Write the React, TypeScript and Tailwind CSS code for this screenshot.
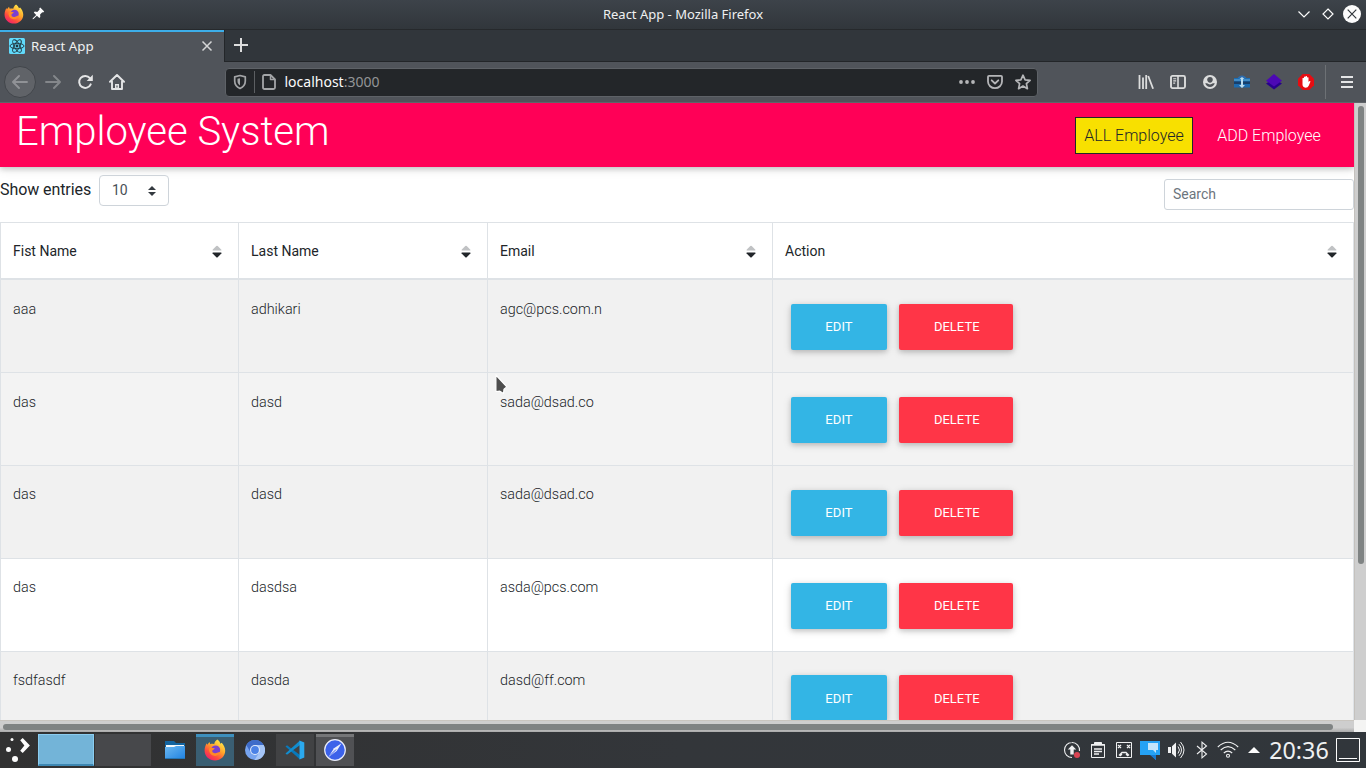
import React from "react";

function FirefoxLogo({ id, size }: { id: string; size: number }) {
  return (
    <svg width={size} height={size} viewBox="0 0 22 22">
      <defs>
        <linearGradient id={id} x1="0.85" y1="0.05" x2="0.2" y2="1">
          <stop offset="0" stopColor="#fff04e" />
          <stop offset="0.4" stopColor="#ffa52a" />
          <stop offset="0.7" stopColor="#ff4f3c" />
          <stop offset="1" stopColor="#ee1a72" />
        </linearGradient>
      </defs>
      <path
        d="M13.3.5c2 1.400 2.700 2.700 3.100 4.300l1.300-1c2 2.200 3.500 4.800 3.500 8 0 5.500-4.500 9.700-10.200 9.700S.6 17.100.6 11.700c0-2.800.8-5.300 2-7.400l.6 1.500L5.500 3l.8 2.200c1.200-.5 2.700-.4 3.900.1.300-2 1.300-3.700 3.100-4.800z"
        fill={`url(#${id})`}
      />
      <circle cx="11.600" cy="11" r="4.600" fill="#7a3fd0" />
      <path
        d="M5 9.500c2-.9 3.600-.5 5.800-.3-.3 1.500-2.600 1.300-2.600 2.900 0 1.700 2 2.600 4 2 1.700-.5 2.600-1.700 4.200-1-1.300 3.200-4.400 4.400-7.100 3.500C6.300 15.600 4.600 12.500 5 9.500z"
        fill="#ff8a26"
      />
    </svg>
  );
}

function TitleBar() {
  return (
    <div className="grid h-[30px] grid-cols-[1fr_auto_1fr] items-center border-b border-[#26292c] bg-linear-to-b from-[#3d434a] to-[#31363b]">
      <div className="-mt-0.5 flex items-center gap-2 pl-1">
        <FirefoxLogo id="fx-title" size={20} />
        <svg width="13" height="13" viewBox="0 0 13 13" fill="#fcfcfc">
          <path d="M8.200.6l4 4-1.100.9-.8-.2-2.200 2.300.2 2.500-1 1L4.900 8.700 1.500 12.100.6 12.300l.2-1L4.200 8 1.800 5.600l1-1 2.500.3 2.300-2.300-.3-1z" />
        </svg>
      </div>
      <div className="-mt-0.5 text-[13px] leading-5 text-[#eff0f1]">React App - Mozilla Firefox</div>
      <div className="-mt-px flex items-center justify-end gap-[6px] pr-[5px]">
        <svg width="18" height="18" viewBox="0 0 18 18" fill="none" stroke="#fcfcfc" strokeWidth="1.200">
          <path d="M3.500 6.500L9 12l5.500-5.500" />
        </svg>
        <svg width="18" height="18" viewBox="0 0 18 18" fill="none" stroke="#fcfcfc" strokeWidth="1.200">
          <path d="M9 4l5 5-5 5-5-5z" />
        </svg>
        <svg width="18" height="18" viewBox="0 0 18 18">
          <circle cx="9" cy="9" r="9" fill="#fcfcfc" />
          <path d="M4.700 4.700l8.600 8.600M13.300 4.700l-8.600 8.600" stroke="#31363b" strokeWidth="1.200" />
        </svg>
      </div>
    </div>
  );
}

function TabStrip() {
  return (
    <div className="flex h-[32px] bg-[#31363b]">
      <div className="flex w-[224px] items-center border-t-2 border-[#3daee9] bg-[#50545a] pr-[10px] pb-[2px] pl-[9px]">
        <svg width="16" height="16" viewBox="0 0 16 16">
          <rect width="16" height="16" rx="1.500" fill="#61dafb" />
          <g fill="none" stroke="#20363f" strokeWidth="0.900">
            <ellipse cx="8" cy="8" rx="7" ry="2.700" />
            <ellipse cx="8" cy="8" rx="7" ry="2.700" transform="rotate(60 8 8)" />
            <ellipse cx="8" cy="8" rx="7" ry="2.700" transform="rotate(120 8 8)" />
          </g>
          <circle cx="8" cy="8" r="1.400" fill="#20363f" />
        </svg>
        <span className="ml-[6px] flex-1 text-[13.300px] leading-5 text-[#eff0f1]">React App</span>
        <svg width="14" height="14" viewBox="0 0 14 14" stroke="#d5d6d7" strokeWidth="1.500">
          <path d="M2.500 2.500l9 9M11.500 2.500l-9 9" />
        </svg>
      </div>
      <div className="flex flex-1 items-center border-b border-l border-[#232629] pl-2">
        <svg width="16" height="16" viewBox="0 0 16 16" stroke="#dcdddd" strokeWidth="2" className="-mt-px">
          <path d="M8 1v14M1 8h14" />
        </svg>
      </div>
    </div>
  );
}

function Slot({ children }: { children: React.ReactNode }) {
  return <div className="flex h-8 w-8 shrink-0 items-center justify-center">{children}</div>;
}

function Toolbar() {
  return (
    <div className="flex h-[41px] items-center border-b border-[#606469] bg-[#50545a] pl-1">
      <div className="flex h-8 w-8 items-center justify-center rounded-full border border-[#42464b] bg-[#606368]">
        <svg width="16" height="16" viewBox="0 0 16 16" fill="none" stroke="#909296" strokeWidth="1.900" strokeLinecap="round" strokeLinejoin="round">
          <path d="M15 8H1.200M7 2L1 8l6 6" />
        </svg>
      </div>
      <div className="ml-px flex">
        <Slot>
          <svg width="16" height="16" viewBox="0 0 16 16" fill="none" stroke="#84878b" strokeWidth="1.900" strokeLinecap="round" strokeLinejoin="round">
            <path d="M1 8h13.800M9 2l6 6-6 6" />
          </svg>
        </Slot>
        <Slot>
          <svg width="16" height="16" viewBox="0 0 16 16">
            <path d="M13.700 10.300A6 6 0 1 1 12.900 4.200" fill="none" stroke="#e4e5e6" strokeWidth="2" strokeLinecap="round" />
            <path d="M15.800.8v6.200H9.700z" fill="#e4e5e6" />
          </svg>
        </Slot>
        <Slot>
          <svg width="16" height="16" viewBox="0 0 16 16" fill="none" stroke="#e4e5e6" strokeWidth="1.900" strokeLinejoin="round" strokeLinecap="round">
            <path d="M1 7.800L8 1l7 6.800M3 7.500V15h10V7.500" />
            <path d="M8 15v-5" strokeWidth="4" strokeLinecap="butt" />
            <path d="M8 13.500v-2" stroke="#50545a" strokeWidth="1.200" strokeLinecap="butt" />
          </svg>
        </Slot>
      </div>
      <div className="ml-[92px] flex h-[29px] w-[813px] items-center rounded-[4px] border border-[#5e6267] bg-[#232629] pr-[6px] pl-[6px]">
        <svg width="16" height="16" viewBox="0 0 16 16" fill="none" stroke="#a3a5a7" strokeWidth="1.700">
          <path d="M8 1.500l5.300 1.300V7c0 3.700-2 5.900-5.300 7.500C4.700 12.900 2.700 10.700 2.700 7V2.800z" strokeLinejoin="round" />
          <path d="M8 4.300v7.300C6.200 10.300 5.500 9 5.500 7V4.800z" fill="#a3a5a7" stroke="none" />
        </svg>
        <div className="ml-[6px] h-[22px] w-px bg-[#5c5f62]" />
        <svg width="16" height="16" viewBox="0 0 16 16" fill="none" stroke="#a3a5a7" strokeWidth="1.800" strokeLinejoin="round" className="ml-[6px]">
          <path d="M3.500 1h6L14 5.500V13.500Q14 15 12.500 15h-9Q2 15 2 13.500V2.500Q2 1 3.500 1z" />
          <path d="M9.500 1v4.500H14" strokeWidth="1.500" />
        </svg>
        <span className="ml-[7.500px] flex-1 text-[14px] leading-5 text-[#fcfcfc]">
          localhost<span className="text-[#939597]">:3000</span>
        </span>
        <div className="flex gap-3">
          <svg width="16" height="16" viewBox="0 0 16 16" fill="#b5b6b8">
            <circle cx="2" cy="8" r="1.900" />
            <circle cx="8" cy="8" r="1.900" />
            <circle cx="14" cy="8" r="1.900" />
          </svg>
          <svg width="16" height="16" viewBox="0 0 16 16" fill="none" stroke="#b5b6b8" strokeWidth="1.800" strokeLinecap="round" strokeLinejoin="round">
            <path d="M2 1.800h12q1 0 1 1V7.500a7 6.700 0 0 1-14 0V2.800q0-1 1-1z" />
            <path d="M4.700 6.300L8 9.500l3.300-3.200" />
          </svg>
          <svg width="16" height="16" viewBox="0 0 16 16" fill="none" stroke="#b5b6b8" strokeWidth="1.700" strokeLinejoin="round">
            <path d="M8 1.200l2.100 4.600 5 .5-3.700 3.400 1 5L8 12.100l-4.400 2.600 1-5L.9 6.300l5-.5z" />
          </svg>
        </div>
      </div>
      <div className="ml-[92px] flex">
        <Slot>
          <svg width="16" height="16" viewBox="0 0 16 16" stroke="#dcdddd" strokeWidth="1.800">
            <path d="M1.500 1v14M5 3.500V15M8.200 1v14M10.200 2l4.900 12.800" />
          </svg>
        </Slot>
        <Slot>
          <svg width="16" height="16" viewBox="0 0 16 16" fill="none" stroke="#dcdddd">
            <rect x="1" y="1.900" width="14" height="12.200" rx="1.500" strokeWidth="1.900" />
            <path d="M8 2v12" strokeWidth="1.600" />
            <path d="M3.200 4.700h3M3.200 6.900h3M3.200 9.100h2" strokeWidth="1.100" />
          </svg>
        </Slot>
        <Slot>
          <svg width="16" height="16" viewBox="0 0 16 16">
            <circle cx="8" cy="8" r="7" fill="#dcdddd" />
            <path d="M8 3.100c1.900 0 2.800 1.200 2.800 2.700S9.600 8.700 8 8.700 5.200 7.300 5.200 5.800 6.100 3.100 8 3.100z" fill="#50545a" />
            <path d="M3.200 9.300h1.900c1.700 1.500 4.100 1.500 5.800 0h1.900c-.7 2.300-2.600 3.800-4.800 3.800s-4.100-1.500-4.800-3.800z" fill="#50545a" />
          </svg>
        </Slot>
        <Slot>
          <svg width="16" height="16" viewBox="0 0 16 16">
            <path d="M3 5.500C4 2.500 6 1.500 8 1.500s4 1 5 4z" fill="#2d6db0" />
            <rect x="0" y="4" width="16" height="9.500" fill="#1c6bb0" />
            <path d="M0 5h16v2H0z" fill="#3f8cc8" />
            <path d="M0 7.500h16v2.500H0z" fill="#173f6b" />
            <path d="M7 4h2v7h2l-3 3-3-3h2zM5.500 5L8 3l2.500 2z" fill="#b9daee" />
          </svg>
        </Slot>
        <Slot>
          <svg width="16" height="16" viewBox="0 0 16 16">
            <path d="M0 9.500L8 5l8 4.500-8 6z" fill="#28008d" />
            <path d="M8 0l8 6.700-8 5.800-8-5.800z" fill="#4c08b5" />
          </svg>
        </Slot>
        <Slot>
          <svg width="16" height="16" viewBox="0 0 16 16">
            <path d="M4.700 0h6.600L16 4.700v6.600L11.300 16H4.700L0 11.300V4.700z" fill="#e60d12" />
            <path d="M4.500 4.300q.8-.9 1.500 0V3q.8-.9 1.500 0v-.7q.8-.8 1.500 0V3.600q.8-.8 1.500 0V8l1-.9q1.100-.2.9.7l-1.700 4Q9.900 13.800 7.600 13.800C5.200 13.500 4.500 12 4.500 10.500z" fill="#fff" />
          </svg>
        </Slot>
      </div>
      <div className="ml-[3px] h-[34px] w-px bg-[#6d7175]" />
      <svg width="14" height="14" viewBox="0 0 14 14" stroke="#e4e5e6" strokeWidth="1.900" className="ml-[14px]">
        <path d="M1 2h12M1 7h12M1 12h12" />
      </svg>
    </div>
  );
}

function SortIcon() {
  return (
    <svg width="10" height="14" viewBox="0 0 10 14" className="mt-0.5">
      <path d="M.9 5.400Q.2 5.400.6 4.700L4.300 1Q5 .4 5.700 1L9.400 4.700Q9.800 5.400 9.100 5.400z" fill="#c0c2c4" />
      <path d="M.9 7.600Q.2 7.600.6 8.400L4.300 12.200Q5 12.900 5.700 12.200L9.400 8.400Q9.800 7.600 9.100 7.600z" fill="#212529" />
    </svg>
  );
}

const headers = ["Fist Name", "Last Name", "Email", "Action"];
const rows = [
  { cells: ["aaa", "adhikari", "agc@pcs.com.n"], tone: "bg-[#f1f1f1]" },
  { cells: ["das", "dasd", "sada@dsad.co"], tone: "bg-[#f3f3f3]" },
  { cells: ["das", "dasd", "sada@dsad.co"], tone: "bg-[#f1f1f1]" },
  { cells: ["das", "dasdsa", "asda@pcs.com"], tone: "bg-white" },
  { cells: ["fsdfasdf", "dasda", "dasd@ff.com"], tone: "bg-[#f1f1f1]" },
];

function EmployeeTable() {
  return (
    <div className="border-t border-r border-[#dee2e6] text-[14.400px]">
      <div className="grid h-[57.400px] grid-cols-[238px_249px_285px_581px] border-b-2 border-[#dee2e6]">
        {headers.map((h) => (
          <div key={h} className="flex items-center justify-between border-l border-[#dee2e6] pr-4 pl-3 text-[14px] leading-[22px] font-normal text-[#212529]">
            <span>{h}</span>
            <SortIcon />
          </div>
        ))}
      </div>
      {rows.map((row, i) => (
        <div key={i} className={`grid h-[92.800px] grid-cols-[238px_249px_285px_581px] border-b border-[#dee2e6] ${row.tone}`}>
          {row.cells.map((c, j) => (
            <div key={j} className="border-l border-[#dee2e6] pt-[18.400px] pl-3 leading-[22px] font-light text-[#212529]">
              {c}
            </div>
          ))}
          <div className="flex items-start gap-3 border-l border-[#dee2e6] pt-[23.800px] pl-[18px]">
            <button className="h-[46px] w-24 rounded-[2px] bg-[#33b5e5] text-[13px] tracking-[0.1px] text-white shadow-[0_2px_5px_0_rgba(0,0,0,0.16),0_2px_10px_0_rgba(0,0,0,0.12)]">EDIT</button>
            <button className="h-[46px] w-[114px] rounded-[2px] bg-[#ff3547] pl-[1.500px] text-[13px] text-white shadow-[0_2px_5px_0_rgba(0,0,0,0.16),0_2px_10px_0_rgba(0,0,0,0.12)]">DELETE</button>
          </div>
        </div>
      ))}
    </div>
  );
}

function Page() {
  return (
    <div className="h-[617px] w-[1354px] overflow-hidden bg-white font-[Roboto,sans-serif]">
      <div className="flex h-16 items-start justify-between bg-[#ff0057] pr-[25px] pl-4 shadow-[0_2px_5px_0_rgba(0,0,0,0.16),0_2px_10px_0_rgba(0,0,0,0.12)]">
        <h1 className="mt-[5px] text-[40px] leading-[48px] font-light text-white">Employee System</h1>
        <div className="mt-[14px] flex gap-4 text-[16px] leading-[35px] font-light">
          <div className="h-[37px] w-[118px] border border-[#212529] bg-[#f8e000] text-center text-[#212529]">ALL Employee</div>
          <div className="h-[37px] w-[120px] border border-transparent text-center text-white">ADD Employee</div>
        </div>
      </div>
      <div className="flex h-[55px] items-start justify-between pt-2">
        <div className="flex items-center text-[16px] text-[#212529]">
          <span className="-mt-0.5 w-[91px] tracking-[-0.080px] whitespace-nowrap">Show entries</span>
          <div className="ml-2 flex h-[31px] w-[70px] items-center justify-between rounded-[4px] border border-[#ced4da] pr-3 pl-3 text-[14px] text-[#495057]">
            10
            <svg width="8" height="10" viewBox="0 0 8 10" fill="#343a40">
              <path d="M4 0l4 4H0zM4 10L0 6h8z" />
            </svg>
          </div>
        </div>
        <div className="mt-1 flex h-[31px] w-[190px] items-center rounded-[3px] border border-[#ced4da] px-2 text-[14px] text-[#6c757d]">Search</div>
      </div>
      <EmployeeTable />
    </div>
  );
}

function Tray({ children }: { children: React.ReactNode }) {
  return <div className="flex w-[26px] justify-center">{children}</div>;
}

function Taskbar() {
  return (
    <div className="flex h-9 items-center bg-linear-to-r from-[#313131] via-[#33363a] to-[#31363b]">
      <svg width="38" height="36" viewBox="0 0 38 36" fill="#fcfcfc">
        <circle cx="12" cy="7.500" r="1.500" />
        <circle cx="8.500" cy="17.500" r="2.500" />
        <circle cx="15" cy="27" r="3" />
        <path d="M20.200 8.300L22.700 6l7.200 7.400-7.200 7.700-2.500-2.400 4.200-5.300z" />
      </svg>
      <div className="flex gap-px">
        <div className="h-8 w-14 border border-b-2 border-[#8bcdf0] border-b-[#3d87b2] bg-[#73b4d8]" />
        <div className="h-8 w-14 bg-[#47484b]" />
      </div>
      <div className="ml-[5px] flex h-8 w-[38px] items-center justify-center">
        <svg width="20" height="18" viewBox="0 0 20 18">
          <defs>
            <linearGradient id="folder" x1="0" y1="0" x2="1" y2="1">
              <stop offset="0" stopColor="#6cb8f0" />
              <stop offset="1" stopColor="#1f82e2" />
            </linearGradient>
          </defs>
          <path d="M0 0h9l2 2h9v8H0z" fill="#14649f" />
          <path d="M1 4h18v5H1z" fill="#f5f8fa" />
          <path d="M0 6h9l2-1h9v13H0z" fill="url(#folder)" />
          <path d="M0 17h20v1H0z" fill="#2575b4" />
        </svg>
      </div>
      <div className="ml-0.5 flex h-8 w-[38px] items-center justify-center border-t-[3px] border-[#3d8fbd] bg-[#3a5e72] pb-[3px]">
        <FirefoxLogo id="fx-task" size={22} />
      </div>
      <div className="ml-0.5 flex h-8 w-[38px] items-center justify-center">
        <svg width="20" height="20" viewBox="0 0 20 20">
          <circle cx="10" cy="10" r="10" fill="#77a4ef" />
          <path d="M1.300 5A10 10 0 0 1 18.700 5H10L5.700 12.500z" fill="#3e6cc9" />
          <path d="M18.700 5A10 10 0 0 1 9.500 20L14.300 12.500 10 5z" fill="#a5c5f7" />
          <circle cx="10" cy="10" r="5" fill="#dfe9fa" />
          <circle cx="10" cy="10" r="3.900" fill="#4b82e6" />
        </svg>
      </div>
      <div className="ml-0.5 flex h-8 w-[38px] items-center justify-center bg-[#414244]">
        <svg width="20" height="20" viewBox="0 0 20 20">
          <path d="M.5 6.500L2 5.200 15 15v4.500z" fill="#0879bb" />
          <path d="M.5 13.500L2 14.800 15 5V.5z" fill="#118dd0" />
          <path d="M14.500.5L19.300 2.500v15l-4.800 2z" fill="#2ba9ee" />
        </svg>
      </div>
      <div className="ml-0.5 flex h-8 w-[38px] items-center justify-center border-t-[3px] border-[#757678] bg-[#505154] pb-[3px]">
        <svg width="22" height="22" viewBox="0 0 22 22">
          <circle cx="11" cy="11" r="10.300" fill="#3c62ea" stroke="#e9edfb" strokeWidth="1.200" />
          <path d="M4.500 18L10 9.300 17.500 4.300 12.700 12z" fill="#e9edfb" />
          <path d="M6 16.500l6-6" stroke="#3c62ea" />
        </svg>
      </div>
      <div className="flex-1" />
      <div className="flex items-center">
        <Tray>
          <svg width="18" height="18" viewBox="0 0 18 18">
            <path d="M9 1.500a7.500 7.500 0 1 0 0 15M9 1.500A7.500 7.500 0 0 1 16.500 10" fill="none" stroke="#eff0f1" strokeWidth="1.100" />
            <path d="M9 4.200L4.800 8.500H7.300v5h3.400v-5h2.500z" fill="#eff0f1" />
            <circle cx="14" cy="14" r="3" fill="#da4453" />
          </svg>
        </Tray>
        <Tray>
          <svg width="16" height="18" viewBox="0 0 16 18" fill="none" stroke="#eff0f1">
            <path d="M1.500 3.500h13v13h-13z" />
            <path d="M4.500 3.500V1.500h7v2z" fill="#eff0f1" />
            <path d="M1 4h14M4 8h8M4 10.500h8M4 13h5" strokeWidth="1.300" />
          </svg>
        </Tray>
        <Tray>
          <svg width="16" height="16" viewBox="0 0 16 16" fill="none" stroke="#eff0f1">
            <path d="M.5.500h15v15H.5z" />
            <path d="M2 3l3 3M5 3L2 6M11 3l3 3M14 3l-3 3M3 13.500L6 10.500h4l3 3M6 12l-2 2M10 12l2 2" strokeWidth="1.300" />
          </svg>
        </Tray>
        <Tray>
          <svg width="20" height="20" viewBox="0 0 20 20">
            <path d="M0 1h20v14h-4v5l-5-5H0z" fill="#25a2f5" />
            <path d="M10 15h6v5z" fill="#1878ce" />
            <path d="M8 3h10v7h-2v3l-3-3H8z" fill="#c4e5fb" />
          </svg>
        </Tray>
        <Tray>
          <svg width="18" height="18" viewBox="0 0 18 18">
            <path d="M1 6h3v6H1zM5 5.300L9 1.500v15L5 12.700z" fill="#eff0f1" />
            <path d="M11 5.500q3 3.500 0 7M12 3.200q5 5.800 0 11.600M13.500 1q7 8 0 16" fill="none" stroke="#eff0f1" strokeWidth="1" />
          </svg>
        </Tray>
        <Tray>
          <svg width="16" height="18" viewBox="0 0 16 18" fill="none" stroke="#eff0f1" strokeWidth="1.100">
            <path d="M3 5l9.500 8L8 16.800V1.200L12.500 5 3 13" />
          </svg>
        </Tray>
        <Tray>
          <svg width="22" height="18" viewBox="0 0 22 18" fill="none" stroke="#eff0f1" strokeWidth="1.100">
            <path d="M.8 6Q11-3.500 21.200 6M3.700 9Q11 2.300 18.300 9M6.800 12Q11 8.300 15.200 12" />
            <circle cx="11" cy="14.800" r="1.500" />
          </svg>
        </Tray>
        <Tray>
          <svg width="12" height="6" viewBox="0 0 12 6" fill="#fcfcfc">
            <path d="M6 0l6 6H0z" />
          </svg>
        </Tray>
      </div>
      <div className="ml-px w-[62px] text-center text-[23.300px] leading-8 text-[#eff0f1]">20:36</div>
      <svg width="24" height="24" viewBox="0 0 24 24" fill="none" stroke="#fcfcfc" className="mr-[6px] ml-[6px]">
        <path d="M.5.500h23v23H.5zM3 20.500h18" />
      </svg>
    </div>
  );
}

export default function App() {
  return (
    <div className="relative flex h-[768px] w-[1366px] flex-col overflow-hidden bg-[#31363b] font-['Noto_Sans',sans-serif]">
      <TitleBar />
      <TabStrip />
      <Toolbar />
      <div className="flex h-[617px]">
        <Page />
        <div className="flex w-3 justify-center border-l border-[#c4c1bd] bg-[#cecece] pt-[3px]">
          <div className="h-[458px] w-[6px] rounded-full bg-[#7f8383]" />
        </div>
      </div>
      <div className="flex h-3 bg-[#f4f4f3]">
        <div className="flex w-[1354px] items-center border-t border-[#c9c5bf] bg-linear-to-b from-[#cecece] from-60% to-[#aaaaaa] pl-[3px]">
          <div className="h-[6px] w-[1330px] rounded-full bg-[#7f8383]" />
        </div>
      </div>
      <Taskbar />
      <svg width="16" height="24" viewBox="0 0 16 24" className="absolute top-[372px] left-[492px]">
        <path d="M3.900 3v16.500l4-.3 3.600 2.300.5-4.400 2.800-2.200z" fill="#4d4d4d" stroke="#fff" strokeWidth="1.200" strokeLinejoin="round" />
      </svg>
    </div>
  );
}
